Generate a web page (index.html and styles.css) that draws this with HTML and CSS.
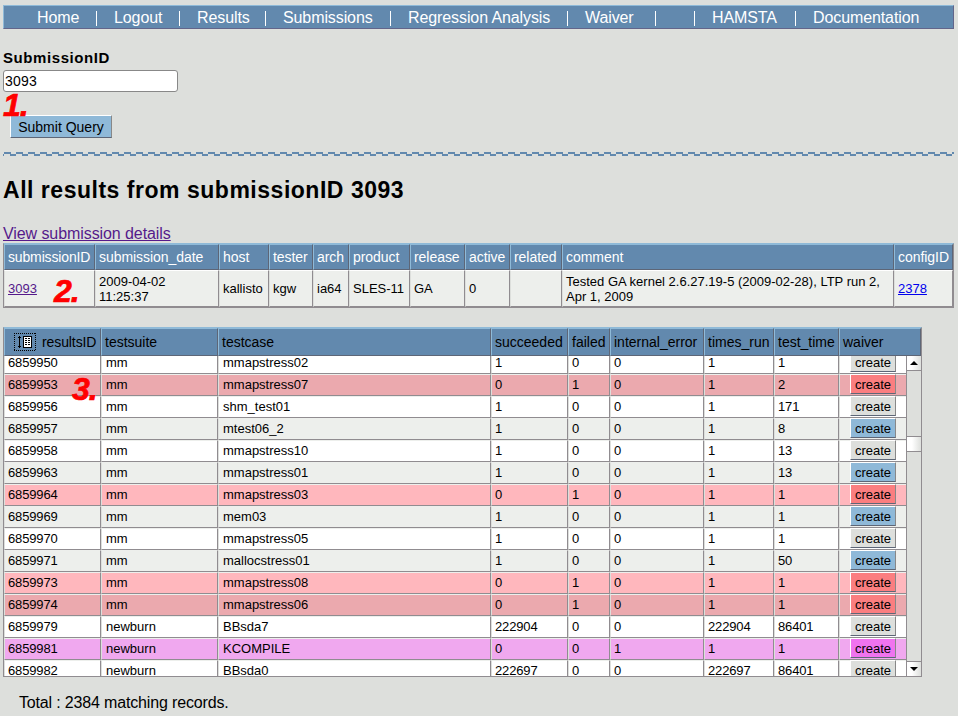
FILE: index.html
```html
<!DOCTYPE html>
<html lang="en">
<head>
<meta charset="utf-8">
<title>Results</title>
<link rel="stylesheet" href="styles.css">
</head>
<body>
<nav class="nav">
<a>Home</a><a>Logout</a><a>Results</a><a>Submissions</a><a>Regression Analysis</a><a>Waiver</a><a></a><a>HAMSTA</a><a>Documentation</a>
</nav>
<form class="query">
<label class="query-label" for="sid"><span>SubmissionID</span></label>
<input class="query-input" id="sid" value="3093">
<button class="submit" type="button">Submit Query</button>
<span class="mark mark1">1.</span>
</form>
<svg class="wave" width="951" height="4" shape-rendering="crispEdges"><defs><pattern id="w" x="1" width="12" height="4" patternUnits="userSpaceOnUse"><path d="M0 0h7v2h-7zM6 2h6v2h-6z" fill="#6289ae"/></pattern></defs><rect width="951" height="4" fill="url(#w)"/></svg>
<h1 class="title"><span>All results from submissionID 3093</span></h1>
<div class="details"><a class="visited">View submission details</a></div>
<section class="summary">
<div class="sum-row sum-head"><span>submissionID</span><span>submission_date</span><span>host</span><span>tester</span><span>arch</span><span>product</span><span>release</span><span>active</span><span>related</span><span>comment</span><span>configID</span></div>
<div class="sum-row sum-body"><span><a class="visited">3093</a></span><span>2009-04-02<br>11:25:37</span><span>kallisto</span><span>kgw</span><span>ia64</span><span>SLES-11</span><span>GA</span><span>0</span><span></span><span>Tested GA kernel 2.6.27.19-5 (2009-02-28), LTP run 2,<br>Apr 1, 2009</span><span><a class="link">2378</a></span></div>
<b class="mark mark2">2.</b>
</section>
<section class="results">
<div class="res-head"><span><svg class="sort" width="22" height="18" shape-rendering="crispEdges"><path d="M0 .5h22M0 17.500h22M.5 0v18M21.500 0v18" stroke="#000" stroke-dasharray="1 1"/><path d="M5 3h1v12h-1zM4 4h3v1h-3zM4 13h3v1h-3z"/><path d="M9 3h9v12h-9z"/><path fill="#fff" d="M10 4h7v10h-7z"/><path d="M11 5h2v1h-2zM14 5h2v1h-2zM11 7h2v1h-2zM14 7h2v1h-2zM11 9h2v1h-2zM14 9h2v1h-2zM11 11h2v1h-2zM14 11h2v1h-2z"/></svg>resultsID</span><span>testsuite</span><span>testcase</span><span>succeeded</span><span>failed</span><span>internal_error</span><span>times_run</span><span>test_time</span><span>waiver</span></div>
<div class="res-view">
<div class="rows" id="rows"></div>
<div class="scroll"><i class="arrow up"></i><i class="thumb"></i><i class="arrow down"></i></div>
</div>
<b class="mark mark3">3.</b>
</section>
<p class="total"><span>Total : 2384 matching records.</span></p>
<script src="rows.js"></script>
</body>
</html>
```
FILE: rows.js
```js
const data = [
  ['white', 6859950, 'mm', 'mmapstress02', 1, 0, 0, 1, 1],
  ['rose', 6859953, 'mm', 'mmapstress07', 0, 1, 0, 1, 2],
  ['white', 6859956, 'mm', 'shm_test01', 1, 0, 0, 1, 171],
  ['gray', 6859957, 'mm', 'mtest06_2', 1, 0, 0, 1, 8],
  ['white', 6859958, 'mm', 'mmapstress10', 1, 0, 0, 1, 13],
  ['gray', 6859963, 'mm', 'mmapstress01', 1, 0, 0, 1, 13],
  ['pink', 6859964, 'mm', 'mmapstress03', 0, 1, 0, 1, 1],
  ['gray', 6859969, 'mm', 'mem03', 1, 0, 0, 1, 1],
  ['white', 6859970, 'mm', 'mmapstress05', 1, 0, 0, 1, 1],
  ['gray', 6859971, 'mm', 'mallocstress01', 1, 0, 0, 1, 50],
  ['pink', 6859973, 'mm', 'mmapstress08', 0, 1, 0, 1, 1],
  ['rose', 6859974, 'mm', 'mmapstress06', 0, 1, 0, 1, 1],
  ['white', 6859979, 'newburn', 'BBsda7', 222904, 0, 0, 222904, 86401],
  ['violet', 6859981, 'newburn', 'KCOMPILE', 0, 0, 1, 1, 1],
  ['white', 6859982, 'newburn', 'BBsda0', 222697, 0, 0, 222697, 86401]
];
document.getElementById('rows').innerHTML = data.map(([kind, ...cells]) =>
  `<div class="row ${kind}">${cells.map(c => `<span${typeof c === 'number' ? ' class="num"' : ''}>${c}</span>`).join('')}<span class="action"><button type="button">create</button></span></div>`
).join('');
```
FILE: styles.css
```css
* { box-sizing: border-box; }
body { margin: 0; padding: 5px 4px 0 3px; width: 958px; height: 716px; overflow: hidden; background: #dddfdc; color: #000; font: 13px/15px "Liberation Sans", sans-serif; }
.nav { display: grid; grid-template-columns: 93px 83px 86px 125px 177px 88px 39px 101px auto; height: 24px; border: 1px solid; border-color: #8fbad8 #62658a #62658a #8fbad8; background: #6289ae; color: #fff; font-size: 16px; line-height: 23px; letter-spacing: -.1px; }
.nav a { padding-left: 17px; white-space: nowrap; }
.nav a:first-child { padding-left: 33px; }
.nav a:not(:last-child) { background: linear-gradient(#fff, #fff) right 5px / 1px 15px no-repeat; }
.query { position: relative; height: 123px; padding-top: 20px; }
.query-label { display: block; height: 21px; font-weight: bold; font-size: 15px; line-height: 18px; letter-spacing: .58px; }
.query-input { display: block; width: 175px; height: 22px; padding: 0 1px; border: 1px solid #888; border-radius: 3px; background: #fff; color: #000; font: 14px "Liberation Sans", sans-serif; letter-spacing: .2px; }
.submit { display: block; width: 102px; height: 23px; margin: 23px 0 0 7px; padding: 0; border: 1px solid; border-color: #fff #888 #5d6677 #fff; background: #8fb9d8; color: #000; font: 14px "Liberation Sans", sans-serif; }
.mark { position: absolute; color: #f00; font: italic bold 32px/32px "Liberation Sans", sans-serif; letter-spacing: -1px; -webkit-text-stroke: .7px #f00; }
.mark1 { left: 0; top: 60px; }
.mark2 { left: 50px; top: 31px; }
.mark3 { left: 68px; top: 45px; }
.wave { display: block; }
.title { height: 48px; margin: 20px 0 0; font-size: 23px; line-height: 28px; letter-spacing: .52px; }
.details { height: 19px; font-size: 16px; line-height: 19px; letter-spacing: -.08px; }
.visited { color: #551a8b; text-decoration: underline; }
.link { color: #0000ee; text-decoration: underline; }
.summary { position: relative; height: 65px; border: 1px solid; border-color: #8fbad8 #908c90 #908c90; }
.sum-row { display: grid; grid-template-columns: 91px 124px 50px 44px 36px 61px 55px 45px 52px 332px 59px; white-space: nowrap; }
.sum-row > span { display: flex; align-items: center; padding-left: 4px; border: 1px solid; }
.sum-head { height: 26px; color: #fff; font-size: 14px; }
.sum-head > span { padding-left: 3px; letter-spacing: -.05px; background: #6289ae; border-color: #8fbad8 #5d6677 #5d6677 #8fbad8; }
.sum-head > span:first-child { letter-spacing: -.15px; }
.sum-body { height: 37px; }
.sum-body > span { padding-left: 3px; background: #edefec; border-color: #fff #908c90 #908c90 #dddfdc; }
.results { position: relative; width: 919px; height: 350px; margin-top: 19px; border: 1px solid; border-color: #8fbad8 #908c90 #908c90; }
.res-head, .row { display: grid; grid-template-columns: 97px 117px 273px 77px 42px 94px 70px 65px 67px; white-space: nowrap; }
.res-head { height: 28px; grid-template-columns: 97px 117px 273px 77px 42px 94px 70px 65px 82px; font-size: 14px; }
.res-head > span { display: flex; align-items: center; padding-left: 3px; background: #6289ae; border: 1px solid; border-color: #8fbad8 #5d6677 #5d6677 #8fbad8; }
.res-head > span:first-child { padding-left: 9px; letter-spacing: -.1px; }
.sort { margin-right: 6px; }
.res-view { display: flex; height: 320px; overflow: hidden; }
.rows { width: 902px; margin-top: -4px; }
.row { height: 22px; }
.row > span { padding-left: 4px; line-height: 20px; border: 1px solid; border-color: #edefec #908c90 #908c90 #dddfdc; background: var(--fill); }
.row > .num { padding-left: 3px; letter-spacing: -.15px; }
.row > .action { padding-left: 10px; border-right: 0; }
.row button { display: block; width: 46px; height: 20px; margin-top: -1px; padding: 0; border: 1px solid; border-color: #fff #888 #5d6677 #fff; background: var(--button); color: #000; font: 13px/17px "Liberation Sans", sans-serif; }
.white { --fill: #fff; --button: #dddfdc; }
.gray { --fill: #edefec; --button: #8fb9d8; }
.rose { --fill: #eba9ae; --button: #fb7e80; }
.pink { --fill: #ffb7bd; --button: #fb7e80; }
.violet { --fill: #f0a8ef; --button: #f073ef; }
.scroll { display: flex; flex-direction: column; width: 15px; border-left: 1px solid #908c90; background: #dddfdc; }
.arrow { display: grid; place-items: center; height: 15px; border: 1px solid #908c90; border-width: 0 0 1px; background: linear-gradient(90deg, #fff 35%, #dddfdc); }
.arrow::after { content: ""; border: 4px solid transparent; border-top-width: 0; border-bottom-color: #000; }
.down { border-width: 1px 0 0; margin-top: auto; }
.down::after { border-top: 4px solid #000; border-bottom: 0; }
.thumb { height: 16px; margin-top: 65px; border: 1px solid #908c90; border-width: 1px 0; background: linear-gradient(90deg, #fff 35%, #dddfdc); }
.total { margin: 16px 0 0 16px; font-size: 16px; line-height: 20px; letter-spacing: -.16px; }
```
